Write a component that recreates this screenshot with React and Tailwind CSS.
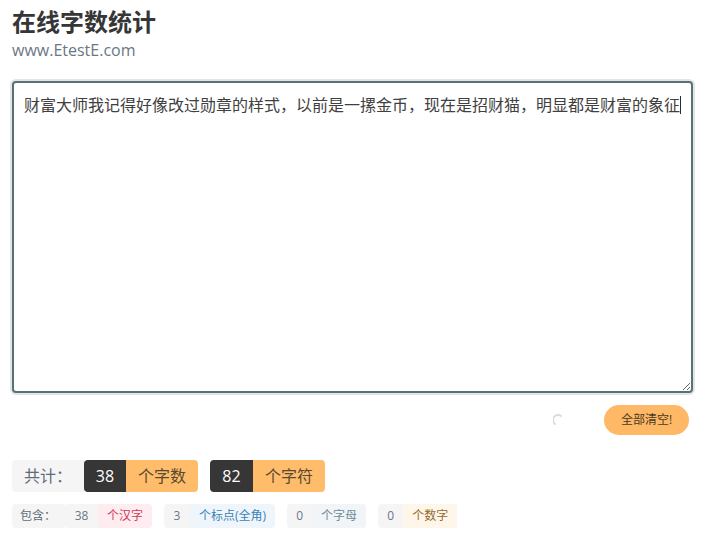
const text = "财富大师我记得好像改过勋章的样式，以前是一摞金币，现在是招财猫，明显都是财富的象征";

const details = [
  { num: "38", label: "个汉字", numW: "w-[33px]", tone: "bg-[#feecf0] text-[#d13a5a]" },
  { num: "3", label: "个标点(全角)", numW: "w-[26px]", tone: "bg-[#eef6fc] text-[#3a82b4]" },
  { num: "0", label: "个字母", numW: "w-[25px]", tone: "bg-[#f1f5f7] text-[#6a8a99]" },
  { num: "0", label: "个数字", numW: "w-[25px]", tone: "bg-[#fff6ea] text-[#946a2c]" },
];

export default function App() {
  return (
    <div className="h-[534px] overflow-hidden bg-white px-3 font-['Open_Sans','Noto_Sans_CJK_SC',sans-serif] text-[#4a4a4a]">
      <h1 className="pt-[4px] text-[24px] leading-[36px] font-bold text-[#363636]">在线字数统计</h1>
      <div className="text-[16px] leading-[20px] text-[#6b7785]">www.EtestE.com</div>

      <div className="relative mt-[21px] h-[312px] w-[681px]">
        <textarea
          readOnly
          defaultValue={text}
          className="block h-full w-full resize-y rounded-[4px] border-2 border-[#5b7075] bg-white p-[10px] text-[16px] leading-[24px] text-[#404040] shadow-[0_0_0_2px_#dde6e8] outline-none"
        />
        {/* caret */}
        <span className="absolute top-[15px] left-[668px] h-[18px] w-px bg-[#1f2d3d]" />
      </div>

      <div className="mt-[12px] flex h-[30px] items-center justify-end pr-[5px]">
        <svg className="mr-[39px]" width="12" height="12" viewBox="0 0 12 12" fill="none">
          <path d="M2 10 A5 5 0 0 1 8 2" stroke="#dbdbdb" strokeWidth="2" strokeLinecap="round" />
        </svg>
        <button className="h-[30px] w-[85px] rounded-full bg-[#ffb866] text-center text-[12px] text-[#4a3a24]">
          全部清空!
        </button>
      </div>

      <div className="mt-[25px] flex h-[32px] gap-3 text-[16px]">
        <div className="flex">
          <span className="flex w-[72px] items-center rounded-l-[4px] bg-[#f5f5f5] pl-3 text-[#5f6b7a]">共计：</span>
          <span className="flex w-[42px] items-center justify-center rounded-l-[4px] bg-[#363636] text-white">38</span>
          <span className="flex w-[72px] items-center justify-center rounded-r-[4px] bg-[#ffbd6b] text-[#5a4a32]">个字数</span>
        </div>
        <div className="flex">
          <span className="flex w-[43px] items-center justify-center rounded-l-[4px] bg-[#363636] text-white">82</span>
          <span className="flex w-[72px] items-center justify-center rounded-r-[4px] bg-[#ffbd6b] text-[#5a4a32]">个字符</span>
        </div>
      </div>

      <div className="mt-[12px] flex h-[24px] gap-3 text-[12px]">
        <span className="-mr-3 flex w-[53px] items-center rounded-l-[4px] bg-[#f5f5f5] pl-2 text-[#5f6b7a]">包含：</span>
        {details.map((d) => (
          <div key={d.label} className="flex rounded-[4px] bg-[#f5f5f5]">
            <span className={`flex items-center justify-center text-[#6b7785] ${d.numW}`}>{d.num}</span>
            <span className={`flex items-center rounded-r-[4px] px-[9px] whitespace-nowrap ${d.tone}`}>{d.label}</span>
          </div>
        ))}
      </div>
    </div>
  );
}
